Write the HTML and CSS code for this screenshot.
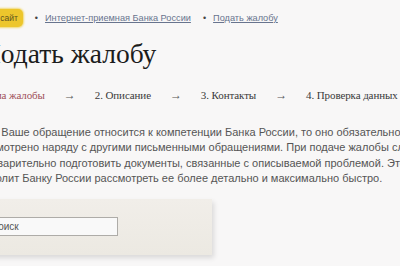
FILE: index.html
```html
<!DOCTYPE html>
<html lang="ru">
<head>
<meta charset="utf-8">
<link rel="stylesheet" href="styles.css">
</head>
<body>
<div class="page">
  <nav class="crumbs">
    <a class="home" href="#">На сайт</a>
    <span class="dot">•</span>
    <a class="crumb" href="#">Интернет-приемная Банка России</a>
    <span class="dot">•</span>
    <a class="crumb" href="#">Подать жалобу</a>
  </nav>
  <h1 class="title">Подать жалобу</h1>
  <div class="steps">
    <span class="step active">1. Тема жалобы</span>
    <span class="arrow">→</span>
    <span class="step">2. Описание</span>
    <span class="arrow">→</span>
    <span class="step">3. Контакты</span>
    <span class="arrow">→</span>
    <span class="step">4. Проверка данных</span>
  </div>
  <p class="intro">Если Ваше обращение относится к компетенции Банка России, то оно обязательно будет<br>рассмотрено наряду с другими письменными обращениями. При подаче жалобы следует<br>предварительно подготовить документы, связанные с описываемой проблемой. Это<br>позволит Банку России рассмотреть ее более детально и максимально быстро.</p>
  <div class="panel">
    <input class="search" type="text" value="Поиск">
  </div>
</div>
</body>
</html>
```
FILE: styles.css
```css
html, body {
  margin: 0;
  padding: 0;
  background: #f8f7f7;
  overflow: hidden;
}
.page {
  width: 400px;
  height: 266px;
  overflow: hidden;
}
.crumbs {
  display: flex;
  align-items: center;
  height: 18px;
  margin: 9px 0 0 -18px;
  font-family: "Liberation Sans", Arial, sans-serif;
  white-space: nowrap;
}
.home {
  display: flex;
  align-items: center;
  height: 18px;
  box-sizing: border-box;
  background: #edc62c;
  color: #5e5420;
  border-radius: 5px;
  padding: 0 5px;
  text-decoration: none;
  font-size: 8.5px;
  box-shadow: 0 0 2px 1px #f0d870;
}
.dot {
  color: #444;
  margin: 0 7px 0 12px;
  font-size: 9px;
}
.crumb {
  color: #68748e;
  text-decoration: underline;
  font-size: 9.2px;
}
.title {
  margin: 11px 0 0 -19px;
  font-family: "Liberation Serif", "Times New Roman", serif;
  font-weight: normal;
  font-size: 27.5px;
  line-height: 32px;
  color: #1c1c1c;
}
.steps {
  display: flex;
  align-items: baseline;
  gap: 19px;
  margin: 18px 0 0 -27px;
  font-family: "Liberation Serif", "Times New Roman", serif;
  font-weight: normal;
  font-size: 11px;
  letter-spacing: -0.1px;
  color: #3a3a3a;
  white-space: nowrap;
}
.step.active { color: #a0505a; }
.arrow { color: #555; font-size: 12px; }
.intro {
  margin: 22px 0 0 -27px;
  font-family: "Liberation Sans", Arial, sans-serif;
  font-size: 11px;
  line-height: 15.4px;
  color: #555;
  white-space: nowrap;
}
.panel {
  margin: 12px 0 0 -10px;
  width: 222px;
  height: 56px;
  background: linear-gradient(#f1eee9, #ece9e2);
  box-shadow: 2px 3px 5px rgba(0,0,0,0.12);
  display: flex;
  align-items: center;
}
.search {
  margin: 0 0 0 -12px;
  width: 140px;
  height: 19px;
  box-sizing: border-box;
  border: 1px solid #aeaca8;
  background: #f9f9f9;
  font-family: "Liberation Sans", Arial, sans-serif;
  font-size: 10px;
  color: #555;
  padding: 0 2px 0 12px;
}
```
